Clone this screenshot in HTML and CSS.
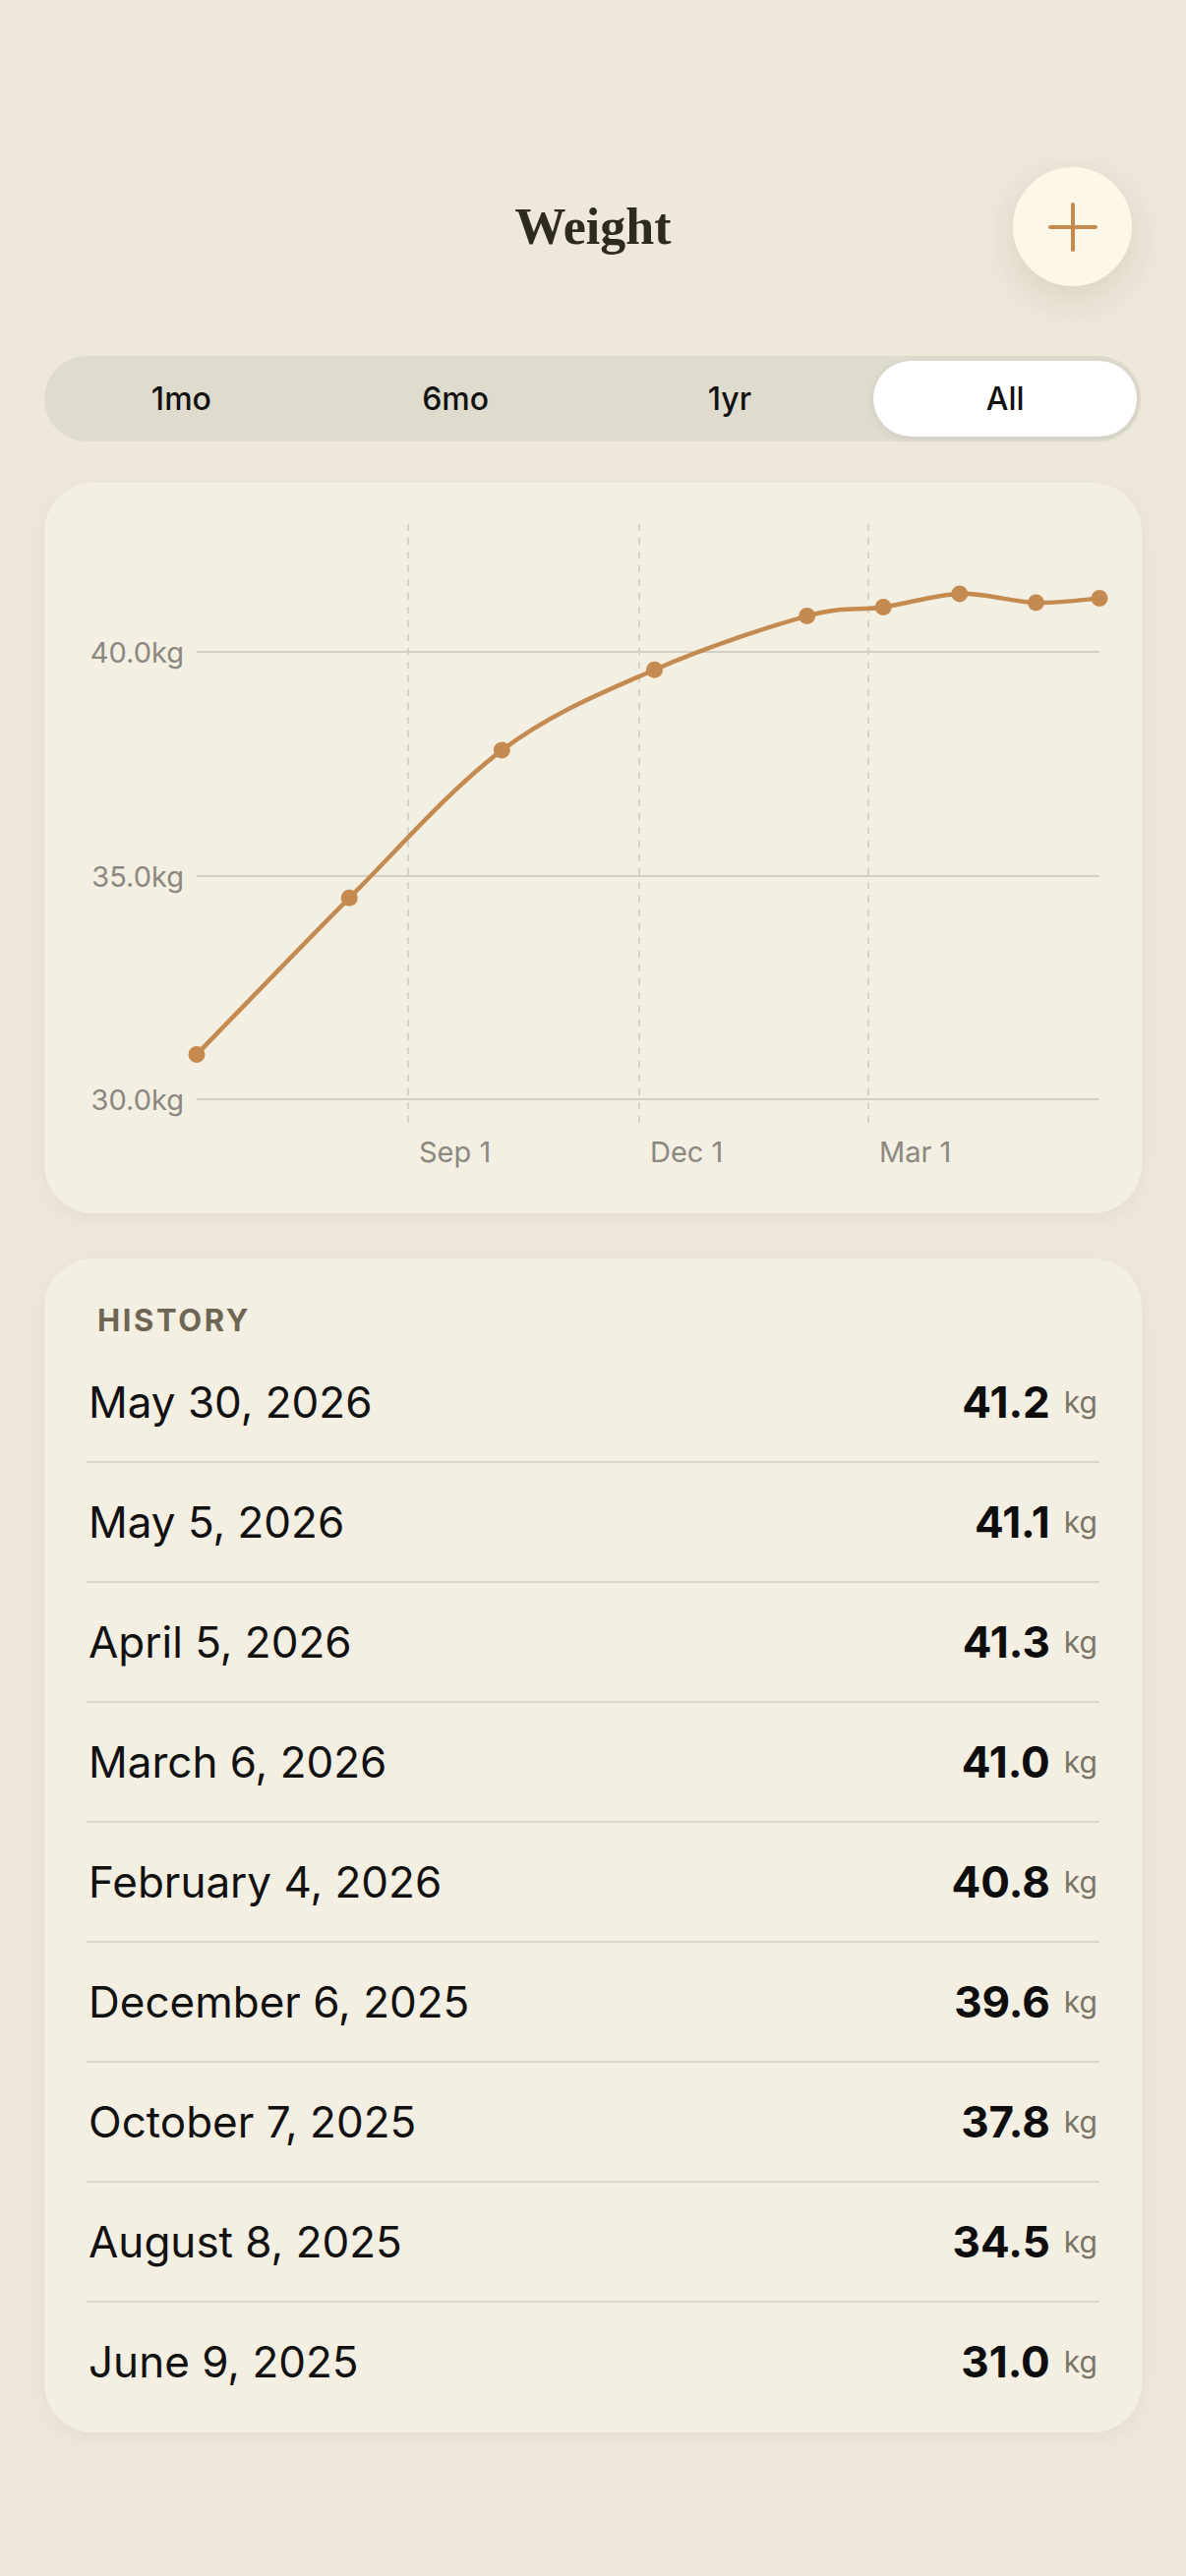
FILE: index.html
```html
<!DOCTYPE html>
<html lang="en">
<head>
  <meta charset="UTF-8">
  <meta name="viewport" content="width=device-width, initial-scale=1.0">
  <title>Weight</title>
  <link rel="stylesheet" href="styles.css">
</head>
<body>

  <div class="screen">
    <header class="top-bar">
      <span></span>
      <h1 class="title">Weight</h1>
      <button class="add-btn" aria-label="Add weight">
        <svg width="50" height="50" viewBox="0 0 50 50">
          <path d="M25 2 V48 M2 25 H48" stroke="#c48a50" stroke-width="4" stroke-linecap="round" fill="none"/>
        </svg>
      </button>
    </header>

    <div class="range-picker">
      <div class="range-item">1mo</div>
      <div class="range-item">6mo</div>
      <div class="range-item">1yr</div>
      <div class="range-item active">All</div>
    </div>

    <div class="card chart-card">
      <svg class="chart" width="1116" height="743" viewBox="0 0 1116 743">
        <!-- date grid -->
        <g stroke="#cfcac0" stroke-width="1.5" stroke-dasharray="7 7">
          <line x1="370" y1="42" x2="370" y2="652"/>
          <line x1="605" y1="42" x2="605" y2="652"/>
          <line x1="838" y1="42" x2="838" y2="652"/>
        </g>
        <!-- weight grid -->
        <g stroke="#d3cfc5" stroke-width="2">
          <line x1="155" y1="172" x2="1073" y2="172"/>
          <line x1="155" y1="400" x2="1073" y2="400"/>
          <line x1="155" y1="627" x2="1073" y2="627"/>
        </g>
        <g class="axis-label" text-anchor="end">
          <text x="142" y="183">40.0kg</text>
          <text x="142" y="411">35.0kg</text>
          <text x="142" y="638">30.0kg</text>
        </g>
        <g class="axis-label">
          <text x="381" y="691">Sep 1</text>
          <text x="616" y="691">Dec 1</text>
          <text x="849" y="691">Mar 1</text>
        </g>
        <path class="trend" d="M155 581.5 C180.9 555 258.5 473.9 310.2 422.3 C361.9 370.7 413.6 310.8 465.3 272.1 C517 233.4 568.8 213 620.5 190.2 C672.2 167.5 736.8 146.2 775.6 135.6 C814.4 125 827.3 130.3 853.2 126.5 C879.1 122.7 904.9 113.7 930.8 112.9 C956.7 112.2 984.7 121.3 1008.4 122 C1032.1 122.8 1062.2 118.2 1073 117.4"/>
        <g fill="#c48a50">
          <circle cx="155" cy="581.5" r="8.5"/>
          <circle cx="310.2" cy="422.3" r="8.5"/>
          <circle cx="465.3" cy="272.1" r="8.5"/>
          <circle cx="620.5" cy="190.2" r="8.5"/>
          <circle cx="775.6" cy="135.6" r="8.5"/>
          <circle cx="853.2" cy="126.5" r="8.5"/>
          <circle cx="930.8" cy="112.9" r="8.5"/>
          <circle cx="1008.4" cy="122" r="8.5"/>
          <circle cx="1073" cy="117.4" r="8.5"/>
        </g>
      </svg>
    </div>

    <div class="card history-card">
      <div class="section-title">HISTORY</div>
      <div class="entry"><span class="entry-date">May 30, 2026</span><span class="entry-value"><b>41.2</b><small>kg</small></span></div>
      <div class="entry"><span class="entry-date">May 5, 2026</span><span class="entry-value"><b>41.1</b><small>kg</small></span></div>
      <div class="entry"><span class="entry-date">April 5, 2026</span><span class="entry-value"><b>41.3</b><small>kg</small></span></div>
      <div class="entry"><span class="entry-date">March 6, 2026</span><span class="entry-value"><b>41.0</b><small>kg</small></span></div>
      <div class="entry"><span class="entry-date">February 4, 2026</span><span class="entry-value"><b>40.8</b><small>kg</small></span></div>
      <div class="entry"><span class="entry-date">December 6, 2025</span><span class="entry-value"><b>39.6</b><small>kg</small></span></div>
      <div class="entry"><span class="entry-date">October 7, 2025</span><span class="entry-value"><b>37.8</b><small>kg</small></span></div>
      <div class="entry"><span class="entry-date">August 8, 2025</span><span class="entry-value"><b>34.5</b><small>kg</small></span></div>
      <div class="entry"><span class="entry-date">June 9, 2025</span><span class="entry-value"><b>31.0</b><small>kg</small></span></div>
    </div>
  </div>

</body>
</html>
```

FILE: styles.css
```css
body {
  margin: 0;
  padding: 0;
  background-color: #eee8db;
  font-family: 'Inter', 'Liberation Sans', sans-serif;
  color: #111;
}
.screen {
  width: 1206px;
  min-height: 2620px;
  box-sizing: border-box;
  padding: 170px 45px 0 45px;
}
.top-bar {
  display: grid;
  grid-template-columns: 1fr auto 1fr;
  align-items: center;
  height: 121px;
}
.title {
  margin: 0;
  font-family: 'Liberation Serif', serif;
  font-size: 52px;
  font-weight: bold;
  color: #2e2a1f;
}
.add-btn {
  justify-self: end;
  margin-right: 10px;
  width: 121px;
  height: 121px;
  border-radius: 50%;
  border: none;
  background-color: #fdf7e7;
  box-shadow: 0 12px 40px rgba(90, 70, 30, 0.14);
  display: flex;
  align-items: center;
  justify-content: center;
  padding: 0;
}
.range-picker {
  margin-top: 71px;
  height: 87px;
  width: 1115px;
  border-radius: 44px;
  background-color: #dfdbcf;
  display: grid;
  grid-template-columns: repeat(4, 1fr);
}
.range-item {
  display: flex;
  align-items: center;
  justify-content: center;
  margin: 5px;
  font-size: 32px;
  font-weight: 500;
  color: #111;
  border-radius: 39px;
}
.range-item.active {
  margin: 5px 4px 5px 7px;
  background-color: #fff;
  box-shadow: 0 2px 8px rgba(0, 0, 0, 0.08);
}
.card {
  background-color: #f3efe3;
  border-radius: 50px;
  box-shadow: 0 6px 24px rgba(90, 70, 30, 0.06);
}
.chart-card {
  margin-top: 42px;
  height: 743px;
}
.chart {
  display: block;
}
.axis-label {
  font-family: 'Inter', 'Liberation Sans', sans-serif;
  font-size: 29px;
  fill: #8b8881;
}
.trend {
  fill: none;
  stroke: #c48a50;
  stroke-width: 4.5;
  stroke-linecap: round;
}
.history-card {
  margin-top: 46px;
  padding: 43px 43px 12px 43px;
}
.section-title {
  padding-left: 11px;
  height: 40px;
  line-height: 40px;
  margin-bottom: 2px;
  font-size: 31px;
  font-weight: 700;
  letter-spacing: 2.6px;
  color: #6e6654;
}
.entry {
  display: flex;
  justify-content: space-between;
  align-items: center;
  height: 121px;
  padding: 0 2px;
}
.entry + .entry {
  border-top: 2px solid #dcd7cb;
  height: 120px;
}
.entry-date {
  font-size: 44px;
  color: #111;
}
.entry-value {
  display: flex;
  align-items: center;
  gap: 14px;
}
.entry-value b {
  font-size: 44px;
  font-weight: 700;
  color: #0d0d0d;
}
.entry-value small {
  font-size: 30px;
  color: #7b7567;
}
```
